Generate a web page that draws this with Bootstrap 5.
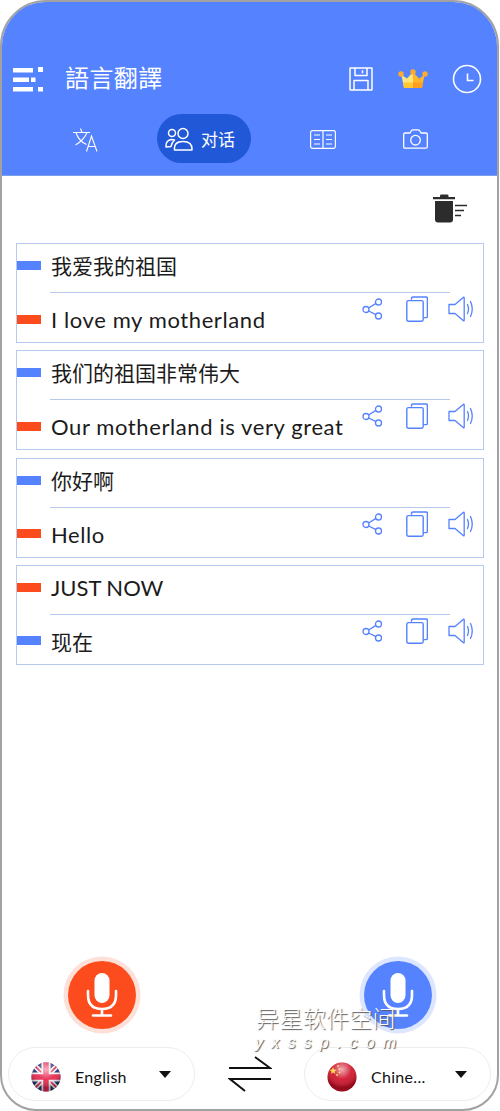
<!DOCTYPE html>
<html lang="en">
<head>
    <meta charset="UTF-8">
    <title>語言翻譯</title>
    <meta name="viewport" content="width=device-width, initial-scale=1">
    <link href="https://cdn.jsdelivr.net/npm/bootstrap@5.3.0/dist/css/bootstrap.min.css" rel="stylesheet">
    <style>
        body {
            background: #fff;
            font-family: "Lato", "Noto Sans CJK SC", sans-serif;
            color: #1b1b1b;
        }
        .phone-frame {
            position: relative;
            width: 499px;
            height: 1111px;
            border: 2px solid #a2a2a2;
            border-radius: 46px 46px 36px 36px;
            overflow: hidden;
            background: #fff;
        }
        .app-header {
            height: 174px;
            background: #5582ff;
            border-bottom: 1px solid #7b9fe8;
            color: #fff;
        }
        .title-row {
            height: 88px;
            padding: 61px 0 0 11px;
        }
        .app-title {
            font-family: "Noto Sans CJK TC", sans-serif;
            font-size: 24px;
            line-height: 28px;
            margin: 0 0 0 22px;
            font-weight: 400;
            letter-spacing: .4px;
        }
        .crown-icon { margin: 6px 24px 0 25px; }
        .clock-icon { margin: 1px 15px 0 0; }
        .tab-row {
            height: 49px;
            margin-top: 24px;
            padding-left: 71px;
        }
        .tab-icon { margin-top: 1px; }
        .tab-pill {
            width: 94px;
            height: 49px;
            margin: 0 59px;
            padding-left: 8px;
            background: #2058d8;
            border-radius: 25px;
            font-family: "Noto Sans CJK SC", sans-serif;
            font-size: 17px;
        }
        .trash-row {
            height: 67px;
            padding: 18px 30px 0 0;
        }
        .talk-list {
            gap: 7.33px;
            margin: 0 13px 0 14px;
        }
        .talk-item {
            position: relative;
            height: 100px;
            border: 1px solid #b7caee;
        }
        .talk-line {
            line-height: 30px;
        }
        .talk-line.first {
            height: 48px;
            padding-bottom: 4px;
        }
        .talk-line.first .side-bar { margin-top: -1px; }
        .talk-line.second {
            height: 49px;
            padding-top: 5px;
        }
        .talk-line.second .side-bar { margin-top: -2px; }
        .text-cjk { font-size: 21px; }
        .text-latin { font-size: 22px; letter-spacing: .6px; }
        .text-caps { font-size: 22px; }
        .talk-rule {
            height: 1px;
            margin: 0 33px;
            background: #b7caee;
        }
        .side-bar {
            width: 24px;
            height: 9px;
            margin-right: 10px;
            flex: none;
        }
        .bar-blue { background: #5582ff; }
        .bar-orange { background: #fc4c1d; }
        .talk-tools {
            position: absolute;
            right: 9px;
            top: 52px;
        }
        .tool-share { margin-right: 23px; }
        .tool-copy { margin-right: 20px; }
        .mic-row {
            padding: 0 65px 0 66px;
            margin-bottom: 18px;
        }
        .mic-btn {
            width: 68px;
            height: 68px;
            border-radius: 50%;
        }
        .mic-orange {
            background: #fc4c1d;
            box-shadow: 0 0 0 4.5px #fde0d7;
        }
        .mic-blue {
            background: #5582ff;
            box-shadow: 0 0 0 4.5px #dde6ff;
        }
        .lang-row {
            padding: 0 6px 8px 6px;
        }
        .lang-pill {
            width: 187px;
            height: 54px;
            border: 1px solid #ececec;
            border-radius: 27px;
            padding: 6px 0 0 22px;
            font-size: 16px;
        }
        .lang-name {
            width: 84px;
            margin-left: 14px;
            color: #111;
            letter-spacing: .3px;
        }
        .lang-caret {
            width: 0;
            height: 0;
            margin-top: -6px;
            border-left: 6.5px solid transparent;
            border-right: 6.5px solid transparent;
            border-top: 7px solid #111;
        }
        .watermark {
            position: absolute;
            left: 253px;
            top: 1001px;
            width: 142px;
            color: #fff;
            text-shadow: 1px 1px 1px #555;
            text-align: center;
            pointer-events: none;
        }
        .watermark-cn {
            font-family: "Noto Sans CJK SC", sans-serif;
            font-size: 23px;
            line-height: 28px;
            font-weight: 300;
            letter-spacing: .3px;
            white-space: nowrap;
        }
        .watermark-en {
            margin-top: 4px;
            font-family: "Liberation Sans", sans-serif;
            font-size: 16px;
            line-height: 16px;
            letter-spacing: 8.2px;
            font-style: italic;
            white-space: nowrap;
        }
    </style>
</head>
<body class="m-0">

<svg width="0" height="0" class="position-absolute">
    <defs>
        <symbol id="ic-share" viewBox="0 0 22 22">
            <g fill="none" stroke="#5582ff" stroke-width="1.3">
                <circle cx="17.5" cy="4" r="3"/>
                <circle cx="5" cy="11.5" r="3"/>
                <circle cx="17.5" cy="18" r="3"/>
                <path d="M15 5.4 7.6 10M7.6 13 15 16.6"/>
            </g>
        </symbol>
        <symbol id="ic-copy" viewBox="0 0 22 26">
            <g fill="none" stroke="#5582ff" stroke-width="1.4" stroke-linejoin="round">
                <path d="M5.5 3.8V2.4Q5.5 1 7 1H20Q21.4 1 21.4 2.4V20.5Q21.4 21.6 20 21.6H17.3"/>
                <rect x=".8" y="4.6" width="16.4" height="20.6" rx="1.6"/>
            </g>
        </symbol>
        <symbol id="ic-speaker" viewBox="0 0 26 26">
            <g fill="none" stroke="#5582ff" stroke-width="1.3" stroke-linejoin="round" stroke-linecap="round">
                <path d="M1 8.5H7L15.5 1.2Q16.2 .8 16.2 2V24Q16.2 25.2 15.5 24.8L7 17.5H1Z"/>
                <path d="M19.5 8.5Q21.5 13 19.5 17.5M22.5 5.5Q26 13 22.5 20.5"/>
            </g>
        </symbol>
        <symbol id="ic-mic" viewBox="0 0 68 68">
            <rect x="26.500" y="12" width="15" height="30" rx="7.500" fill="#fff"/>
            <path d="M20 30V34Q20 48 34 48Q48 48 48 34V30M34 48V54M25 54.500H43" fill="none" stroke="#fff" stroke-width="2.600" stroke-linecap="round"/>
        </symbol>
        <radialGradient id="gloss" cx="50%" cy="25%" r="60%">
            <stop offset="0" stop-color="#fff" stop-opacity=".65"/>
            <stop offset=".55" stop-color="#fff" stop-opacity=".08"/>
            <stop offset="1" stop-color="#000" stop-opacity=".28"/>
        </radialGradient>
        <clipPath id="flag-clip"><circle cx="15" cy="15" r="14.5"/></clipPath>
    </defs>
</svg>

<div class="phone-frame d-flex flex-column">

    <!-- blue header -->
    <div class="app-header flex-shrink-0">
        <div class="title-row d-flex align-items-start">
            <svg width="30" height="26" viewBox="0 0 30 26" class="mt-1" fill="#fff">
                <rect x="0" y="1" width="20" height="4.500"/><rect x="25" y="0" width="5" height="5"/>
                <rect x="0" y="10.500" width="16" height="4.500"/><rect x="18" y="10.500" width="4.500" height="4.500"/>
                <rect x="0" y="20" width="20" height="4.500"/><rect x="25" y="20" width="5" height="4.500"/>
            </svg>
            <h1 class="app-title">語言翻譯</h1>
            <div class="d-flex align-items-start ms-auto">
                <svg width="24" height="24" viewBox="0 0 24 24" class="mt-1" fill="none" stroke="#fff" stroke-width="1.5" stroke-linejoin="round">
                    <path d="M1.5 1H22.5Q23 1 23 1.5V22.5Q23 23 22.5 23H1.5Q1 23 1 22.5V1.5Q1 1 1.5 1Z"/>
                    <path d="M6 1V8.5H18V1M13.5 3.2V6.2M5 23V13.5H19V23"/>
                </svg>
                <svg width="30" height="20" viewBox="0 0 30 20" class="crown-icon">
                    <path d="M3.500 6 9 9.500 15 3V19H6Z" fill="#ffe675"/>
                    <path d="M26.500 6 21 9.500 15 3V19H24Z" fill="#ffb52e"/>
                    <path d="M5.200 13.500H15V19H6Z" fill="#ffc832"/>
                    <path d="M24.800 13.500H15V19H24Z" fill="#ff9f1f"/>
                    <circle cx="3" cy="5" r="2.700" fill="#ffac2a"/><circle cx="15" cy="3" r="2.700" fill="#ffac2a"/><circle cx="27" cy="5" r="2.700" fill="#ffac2a"/>
                </svg>
                <svg width="30" height="30" viewBox="0 0 30 30" class="clock-icon" fill="none" stroke="#fff" stroke-width="1.6">
                    <circle cx="15" cy="15" r="13.500"/>
                    <path d="M15.500 9.500V16.500H21.500"/>
                </svg>
            </div>
        </div>
        <div class="tab-row d-flex align-items-center">
            <svg width="25" height="25" viewBox="0 0 25 25" class="tab-icon" fill="none" stroke="#fff" stroke-width="1.100">
                <path d="M0 5.500H17M7.500 1.500 9 5.500M3 5.500Q5.500 14 13.500 17.500M14 5.500Q11 13 2.500 18"/>
                <path d="M13.500 24.500 18.500 9 24 24.500M15.300 19.500H22.300"/>
            </svg>
            <div class="tab-pill d-flex align-items-center gap-2">
                <svg width="28" height="24" viewBox="0 0 28 24" fill="none" stroke="#fff" stroke-width="1.500">
                    <circle cx="18" cy="6.500" r="5"/>
                    <path d="M9.500 23Q8.500 14.500 18 14.500Q27.500 14.500 27 23Z" stroke-linejoin="round"/>
                    <circle cx="7" cy="6" r="3.500"/>
                    <path d="M1 20Q.5 13.500 6.500 12.500L9.500 13Q6.500 16 6 19.500Z" stroke-linejoin="round"/>
                </svg>
                <span>对话</span>
            </div>
            <svg width="26" height="19" viewBox="0 0 26 19" class="tab-icon" fill="none" stroke="#fff" stroke-width="1.200" stroke-linejoin="round">
                <rect x=".6" y=".6" width="24.800" height="17.800" rx="1.800"/>
                <path d="M13 .6V18.400M4 5H10M4 9.500H10M4 14H10M16 5H22M16 9.500H22M16 14H22"/>
            </svg>
            <svg width="25" height="20" viewBox="0 0 25 20" class="tab-icon" fill="none" stroke="#fff" stroke-width="1.300" stroke-linejoin="round" style="margin-left:67px">
                <path d="M2 4H7L8.500 1.500Q9 .8 10 .8H15Q16 .8 16.500 1.500L18 4H23Q24.300 4 24.300 5.300V17.700Q24.300 19.200 23 19.200H2Q.7 19.200 .7 17.700V5.300Q.7 4 2 4Z"/>
                <circle cx="12.500" cy="11.200" r="4.800"/>
            </svg>
        </div>
    </div>

    <!-- clear history -->
    <div class="trash-row d-flex justify-content-end flex-shrink-0">
        <svg width="34" height="29" viewBox="0 0 34 29">
            <path d="M7 1.800Q7 .5 8.500 .5H14Q15.500 .5 15.500 1.800V3H22V5.200H0V3H7Z" fill="#2c2c2c"/>
            <path d="M2 7H20V25.500Q20 28.500 17 28.500H5Q2 28.500 2 25.500Z" fill="#2c2c2c"/>
            <path d="M22 11.500H34M22 16.500H31M22 21.500H28" stroke="#2c2c2c" stroke-width="1.500"/>
        </svg>
    </div>

    <!-- conversation -->
    <div id="talkList" class="talk-list d-flex flex-column"></div>

    <!-- mic buttons + language pickers -->
    <div class="mt-auto flex-shrink-0">
        <div class="mic-row d-flex justify-content-between">
            <div class="mic-btn mic-orange"><svg width="68" height="68" class="d-block"><use href="#ic-mic"/></svg></div>
            <div class="mic-btn mic-blue"><svg width="68" height="68" class="d-block"><use href="#ic-mic"/></svg></div>
        </div>
        <div class="lang-row d-flex align-items-center justify-content-between">
            <div class="lang-pill d-flex align-items-center">
                <svg width="30" height="30" viewBox="0 0 30 30" class="flex-shrink-0">
                    <g clip-path="url(#flag-clip)">
                        <rect width="30" height="30" fill="#23306e"/>
                        <path d="M0 0 30 30M30 0 0 30" stroke="#f3f3f3" stroke-width="5"/>
                        <path d="M0 0 30 30M30 0 0 30" stroke="#d8264c" stroke-width="1.600"/>
                        <path d="M15 0V30M0 15H30" stroke="#f3f3f3" stroke-width="9"/>
                        <path d="M15 0V30M0 15H30" stroke="#e8264f" stroke-width="5.500"/>
                        <circle cx="15" cy="15" r="15" fill="url(#gloss)"/>
                    </g>
                </svg>
                <span class="lang-name">English</span>
                <span class="lang-caret"></span>
            </div>
            <svg width="44" height="36" viewBox="0 0 44 36" fill="none" stroke="#111" stroke-width="2">
                <path d="M1 12H42L27 1"/>
                <path d="M43 23H2L17 35"/>
            </svg>
            <div class="lang-pill d-flex align-items-center">
                <svg width="30" height="30" viewBox="0 0 30 30" class="flex-shrink-0">
                    <g clip-path="url(#flag-clip)">
                        <rect width="30" height="30" fill="#cf1027"/>
                        <path d="M6 5 7 7.500 9.500 8 7.500 9.500 8 12 6 10.500 4 12 4.500 9.500 2.500 8 5 7.500Z" fill="#ffd83a"/>
                        <circle cx="11" cy="4" r=".9" fill="#ffd83a"/><circle cx="12.500" cy="7" r=".9" fill="#ffd83a"/>
                        <circle cx="12.500" cy="10.500" r=".9" fill="#ffd83a"/><circle cx="10" cy="13" r=".9" fill="#ffd83a"/>
                        <circle cx="15" cy="15" r="15" fill="url(#gloss)"/>
                    </g>
                </svg>
                <span class="lang-name">Chine...</span>
                <span class="lang-caret"></span>
            </div>
        </div>
    </div>

    <!-- watermark lying over the page -->
    <div class="watermark">
        <div class="watermark-cn">异星软件空间</div>
        <div class="watermark-en">yxssp.com</div>
    </div>
</div>

<script src="https://cdn.jsdelivr.net/npm/bootstrap@5.3.0/dist/js/bootstrap.bundle.min.js"></script>
<script>
// top line, bottom line, text style of each, and which colour each bar gets
const talks = [
    { a: "我爱我的祖国", b: "I love my motherland", aType: "text-cjk", bType: "text-latin", topBar: "bar-blue", lowBar: "bar-orange" },
    { a: "我们的祖国非常伟大", b: "Our motherland is very great", aType: "text-cjk", bType: "text-latin", topBar: "bar-blue", lowBar: "bar-orange" },
    { a: "你好啊", b: "Hello", aType: "text-cjk", bType: "text-latin", topBar: "bar-blue", lowBar: "bar-orange" },
    { a: "JUST NOW", b: "现在", aType: "text-caps", bType: "text-cjk", topBar: "bar-orange", lowBar: "bar-blue" }
];

let list = document.getElementById("talkList");
talks.forEach(t => {
    let item = document.createElement("div");
    item.className = "talk-item";
    item.innerHTML = `
        <div class="talk-line first d-flex align-items-center"><span class="side-bar ${t.topBar}"></span><span class="${t.aType}">${t.a}</span></div>
        <div class="talk-rule"></div>
        <div class="talk-line second d-flex align-items-center"><span class="side-bar ${t.lowBar}"></span><span class="${t.bType}">${t.b}</span></div>
        <div class="talk-tools d-flex align-items-center">
            <svg width="22" height="22" class="tool-share"><use href="#ic-share"/></svg>
            <svg width="22" height="26" class="tool-copy"><use href="#ic-copy"/></svg>
            <svg width="26" height="26"><use href="#ic-speaker"/></svg>
        </div>`;
    list.appendChild(item);
});
</script>
</body>
</html>
